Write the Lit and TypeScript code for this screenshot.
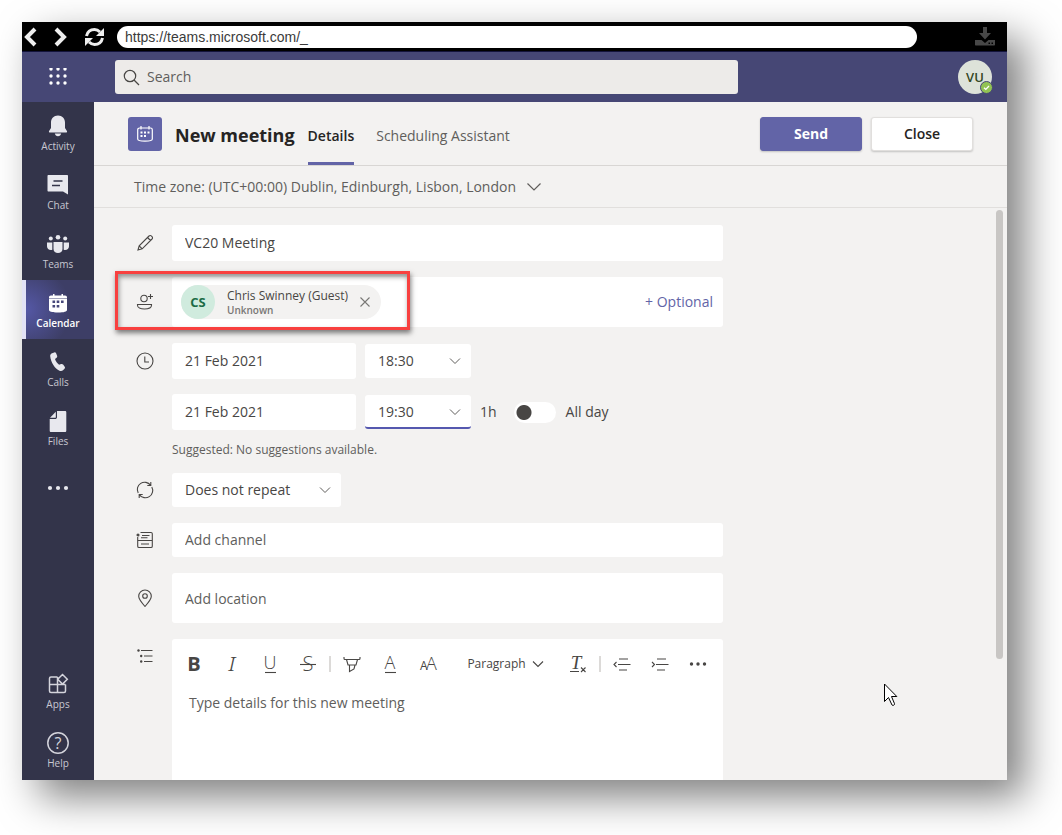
import { LitElement, html, css, svg, TemplateResult } from "lit";
import { customElement } from "lit/decorators.js";
import { classMap } from "lit/directives/class-map.js";

const chevron = html`<svg class="chev" width="14" height="8" viewBox="0 0 14 8" fill="none" stroke="#605e5c" aria-hidden="true"><path d="M2 1.500 7 6.500l5-5"/></svg>`;

const icon = (size: number, body: TemplateResult | ReturnType<typeof svg>, label = "") =>
  html`<svg width=${size} height=${size} viewBox="0 0 ${size} ${size}" role="img" aria-label=${label}>${body}</svg>`;

const railIcons = {
  activity: svg`<path fill="#e8e8ee" d="M12 1.500c4.200 0 7 3 7 7v5.500l1.900 3c.5.900 0 1.500-.8 1.500H3.900c-.8 0-1.300-.6-.8-1.500L5 14V8.500c0-4 2.800-7 7-7zM8.800 19.500h6.400c-.3 1.500-1.600 2.700-3.200 2.700s-2.900-1.200-3.200-2.700z"/>`,
  chat: svg`<path fill="#e8e8ee" d="M2.500 2h18.500c.6 0 1 .4 1 1v18.500L17 18.500H2.500c-.6 0-1-.4-1-1V3c0-.6.4-1 1-1z"/><path stroke="#33344a" stroke-width="1.300" d="M7.500 8h9M6 12.500h8"/>`,
  teams: svg`<g fill="#e8e8ee"><circle cx="12" cy="5.300" r="2.300"/><circle cx="4.800" cy="6.500" r="2"/><circle cx="19.200" cy="6.500" r="2"/><path d="M7.500 10h9v7c0 2.600-2 4-4.500 4s-4.500-1.400-4.500-4zM1 10.500h5.300v7.300C3.300 18.500 1 17 1 14.300zM17.700 10.500H23v3.800c0 2.700-2.300 4.200-5.300 3.500z"/></g>`,
  calendar: svg`<path fill="#fff" d="M5 4.500h2V3h1.500v1.500h7V3H17v1.500h2c1.400 0 2 .8 2 2v1H3v-1c0-1.200.7-2 2-2zM3 8h18v11c0 1.600-3 2.500-9 2.500S3 20.600 3 19z"/><path fill="#46477a" d="M10.700 9.500h2.600v2.600h-2.600zM15 9.500h2.600v2.600H15zM6.500 9.500h2.600v2.600H6.500zM10.700 14h2.600v2.600h-2.600zM6.500 14h2.600v2.600H6.500z"/>`,
  calls: svg`<path fill="#e8e8ee" d="M6 3.200 8.300 2.400c.8-.2 1.500.1 1.800.8l1 2.500c.3.800.1 1.500-.5 2l-1.600 1.400c.8 2.300 2.200 4.200 4.100 5.600l2-.7c.8-.3 1.500 0 2 .6l1.600 2.100c.5.700.4 1.500-.2 2.100l-1.500 1.500c-.9.900-2.200 1-3.500.5C9 18.800 4.800 12.500 4.200 6.300c-.1-1.400.5-2.600 1.800-3.100z"/>`,
  files: svg`<path fill="#e8e8ee" d="M11 2h8c.8 0 1.300.5 1.300 1.300v18.400c0 .8-.5 1.300-1.300 1.300H5c-.8 0-1.300-.5-1.300-1.300V10h5.500c1 0 1.800-.8 1.800-1.800z"/><path fill="#e8e8ee" d="M9.800 2.800v5.400c0 .4-.3.600-.6.600H4z"/>`,
  apps: svg`<path fill="none" stroke="#d4d4dc" stroke-width="1.500" d="M11.500 5H5c-.8 0-1.500.7-1.500 1.500V19c0 .8.700 1.500 1.500 1.500h13c.8 0 1.500-.7 1.500-1.500v-6.500M3.500 12.500h16M11.500 5v15.500M16.500 2.500l4.800 4.800-4.800 4.800-4.800-4.800z"/>`,
  help: svg`<circle cx="12" cy="12" r="10.200" fill="none" stroke="#d4d4dc" stroke-width="1.500"/><text x="12" y="17.500" text-anchor="middle" font-size="16" fill="#d4d4dc">?</text>`,
};

const rail: { id: keyof typeof railIcons; label: string; active?: boolean }[] = [
  { id: "activity", label: "Activity" },
  { id: "chat", label: "Chat" },
  { id: "teams", label: "Teams" },
  { id: "calendar", label: "Calendar", active: true },
  { id: "calls", label: "Calls" },
  { id: "files", label: "Files" },
];

const rowIcons = {
  title: svg`<path d="M2 16l1.200-4.200L13 2c.7-.7 1.700-.7 2.300 0l.7.700c.7.700.7 1.700 0 2.300L6.200 14.800zM11.500 3.500l3 3M3.200 11.800l3 3"/>`,
  people: svg`<circle cx="8" cy="5.500" r="3.200"/><path d="M1.500 11.500h14v.8c0 2.400-3 3.700-7 3.700s-7-1.300-7-3.700zM14.500 1v5M12 3.500h5"/>`,
  clock: svg`<circle cx="9" cy="9" r="8"/><path d="M8.800 4.500V10H13"/>`,
  repeat: svg`<path d="M2.200 12A7.300 7.300 0 0 1 14.500 4.200M15.800 6A7.300 7.300 0 0 1 3.500 13.800M14.800 1v3.500h-3.500M3.200 17v-3.500h3.500"/>`,
  channel: svg`<path d="M4.500 1.500H15c.8 0 1.300.5 1.300 1.300v12.400c0 .8-.5 1.300-1.300 1.300H3c-.8 0-1.300-.5-1.300-1.300V6M1.700 9.500h14.600M6 4.500h7.500M5 6.800h6.500M5 13h8"/><circle cx="2" cy="4" r="1" fill="#484644"/>`,
  place: svg`<path d="M9 17.500C5 13 2.700 10 2.700 7.300a6.300 6.300 0 0 1 12.600 0C15.300 10 13 13 9 17.500z"/><circle cx="9" cy="7" r="2.300"/>`,
  details: svg`<path d="M5 3.500h11.500M8 9h8.500M8 14.500h8.500"/><g fill="#484644" stroke="none"><circle cx="2.500" cy="3.500" r="1.200"/><circle cx="5.200" cy="9" r="1.200"/><circle cx="5.200" cy="14.500" r="1.200"/></g>`,
};

@customElement("app-root")
export class AppRoot extends LitElement {
  static styles = css`
    :host {
      display: block;
      box-sizing: border-box;
      height: 100vh;
      padding: 22px 55px 55px 22px;
      background: #fff;
      overflow: hidden;
      font-family: "Open Sans", "Noto Sans", sans-serif;
      font-size: 14px;
      line-height: 20px;
      color: #484644;
    }
    * { box-sizing: border-box; }
    svg { display: block; flex: none; }
    button, input, select, textarea {
      font: inherit;
      color: inherit;
      margin: 0;
      padding: 0;
      border: 0;
      border-radius: 3px;
      background: none;
      outline: none;
    }
    .window {
      display: flex;
      flex-direction: column;
      height: 100%;
      background: #f3f2f1;
      box-shadow: 17px 17px 38px rgba(0, 0, 0, 0.5);
    }
    .browser {
      display: flex;
      align-items: center;
      height: 30px;
      padding-right: 12px;
      background: #000;
      border-bottom: 1px solid #14143c;
    }
    .browser .tools { display: flex; width: 95px; }
    .browser .url {
      flex: 0 1 800px;
      height: 22px;
      padding: 0 8px;
      border-radius: 11px;
      background: #fff;
      color: #3b3b3b;
      font-family: "Liberation Sans", Arial, sans-serif;
    }
    .browser .save { margin-left: auto; }
    .topbar {
      display: flex;
      align-items: center;
      height: 50px;
      padding-right: 15px;
      background: #464775;
    }
    .waffle { width: 72px; display: flex; justify-content: center; }
    .search {
      flex: 0 1 623px;
      display: flex;
      align-items: center;
      gap: 7px;
      height: 34px;
      margin-left: 21px;
      padding: 0 8px;
      border-radius: 3px;
      background: #edebe9;
    }
    .search input { flex: 1; }
    .search input::placeholder { color: #605e5c; opacity: 1; }
    .me {
      position: relative;
      display: grid;
      place-items: center;
      width: 34px;
      height: 34px;
      margin-left: auto;
      border-radius: 50%;
      background: #dde2d9;
      color: #33471f;
      font-size: 13px;
      font-weight: 600;
    }
    .me svg { position: absolute; right: -1px; bottom: 0; }
    .body { display: flex; flex: 1; min-height: 0; }
    .rail {
      display: flex;
      flex-direction: column;
      width: 72px;
      padding: 1px 0;
      background: #33344a;
    }
    .rail button {
      display: flex;
      flex-direction: column;
      align-items: center;
      gap: 1px;
      height: 59px;
      padding-top: 11px;
      border-radius: 0;
      color: #c8c8d2;
      font-size: 10px;
      line-height: 14px;
    }
    .rail .active {
      padding-right: 4px;
      border-left: 4px solid #e2e2f6;
      background: radial-gradient(circle at 0 50%, #5558a6, #3d3e66 60%);
      color: #fff;
      font-weight: 600;
    }
    .rail .more { justify-content: center; padding: 3px 0 0; }
    .rail .push { margin-top: auto; }
    .main { display: flex; flex-direction: column; flex: 1; min-width: 0; }
    .head {
      display: flex;
      align-items: center;
      height: 64px;
      padding: 0 34px;
      border-bottom: 1px solid #d8d6d4;
    }
    .tile {
      display: grid;
      place-items: center;
      width: 34px;
      height: 34px;
      border-radius: 3px;
      background: #6264a7;
    }
    h1 {
      margin: 0 13px;
      padding-top: 2px;
      font-size: 18px;
      line-height: 24px;
      font-weight: 700;
      color: #252423;
      white-space: nowrap;
    }
    .tabs { display: flex; align-self: stretch; gap: 22px; }
    .tabs button { border-radius: 0; border-bottom: 3px solid transparent; padding-top: 8px; color: #605e5c; white-space: nowrap; }
    .tabs .on { border-bottom-color: #6264a7; color: #252423; font-weight: 600; }
    .actions { display: flex; gap: 9px; margin-left: auto; }
    .actions button {
      width: 102px;
      height: 34px;
      border: 1px solid #e1dfdd;
      background: #fff;
      color: #252423;
      font-weight: 600;
      box-shadow: 0 1px 2px rgba(0, 0, 0, 0.2);
    }
    .actions .primary { border-color: #6264a7; background: #6264a7; color: #fff; font-weight: 700; }
    .zone {
      display: flex;
      align-items: center;
      gap: 10px;
      height: 42px;
      padding: 0 40px;
      border-radius: 0;
      border-bottom: 1px solid #e1dfdd;
      color: #605e5c;
    }
    .scroller { position: relative; display: flex; flex: 1; min-height: 0; overflow: hidden; }
    form {
      display: flex;
      flex-direction: column;
      gap: 16px;
      flex: 1;
      min-width: 0;
      padding: 17px 20px 0 36px;
    }
    .row {
      position: relative;
      display: grid;
      grid-template-columns: 30px minmax(0, 551px);
      column-gap: 12px;
      align-items: center;
      flex: none;
    }
    .row > label { display: grid; place-items: center; }
    .row label svg { fill: none; stroke: #484644; stroke-width: 1.1; }
    .grow { flex: 1; align-items: stretch; min-height: 0; }
    .grow > label { align-self: start; padding-top: 8px; }
    .field { width: 100%; height: 36px; padding: 0 13px 2px; background: #fff; }
    .short { height: 34px; }
    .tall { height: 50px; padding-bottom: 0; }
    ::placeholder { color: #605e5c; opacity: 1; }
    .people {
      display: flex;
      align-items: center;
      height: 50px;
      padding: 0 10px 0 9px;
      border-radius: 3px;
      background: #fff;
    }
    .people input { flex: 1; min-width: 0; height: 34px; }
    .people .optional { color: #6264a7; }
    .chip {
      display: flex;
      align-items: center;
      gap: 12px;
      height: 34px;
      padding-right: 11px;
      border-radius: 17px;
      background: #f3f2f1;
    }
    .chip .pic {
      display: grid;
      place-items: center;
      width: 34px;
      height: 34px;
      border-radius: 50%;
      background: #d0ebde;
      color: #1c6b46;
      font-weight: 700;
      font-size: 13px;
    }
    .chip .who { display: flex; flex-direction: column; font-size: 12px; line-height: 16px; }
    .chip small { font-size: 10px; line-height: 12px; font-weight: 600; color: #797775; }
    .mark {
      position: absolute;
      left: -15px;
      top: -6px;
      width: 295px;
      height: 59px;
      border: 3px solid #f8403f;
      box-shadow: 1px 3px 5px rgba(0, 0, 0, 0.5), inset 1px 3px 5px rgba(0, 0, 0, 0.4);
      pointer-events: none;
    }
    .times { display: grid; grid-template-columns: 184px 106px auto 1fr; gap: 15px 9px; align-items: center; }
    .start { grid-column: 1; }
    .when { align-self: start; padding-top: 9px; }
    .pick { display: grid; align-items: center; height: 34px; border-radius: 3px; background: #fff; }
    .pick select { grid-area: 1 / 1; width: 100%; height: 34px; padding: 0 13px; appearance: none; }
    .pick svg { grid-area: 1 / 1; justify-self: end; margin-right: 9px; pointer-events: none; }
    .focus { border-bottom: 2px solid #5558af; }
    .wide { width: 169px; }
    .allday { display: flex; align-items: center; gap: 10px; margin-left: 8px; }
    .allday input {
      appearance: none;
      width: 42px;
      height: 21px;
      border-radius: 11px;
      background: radial-gradient(circle at 10px 50%, #484644 7px, #fff 8px);
    }
    .hint { margin: 0; padding-top: 13px; font-size: 12px; line-height: 14px; color: #605e5c; }
    .editor { display: flex; flex-direction: column; border-radius: 3px 3px 0 0; background: #fff; }
    .bar { display: flex; align-items: center; height: 50px; padding: 0 3px; }
    .bar button { display: flex; align-items: center; justify-content: center; flex: 0 1 38px; height: 34px; }
    .bar .style { flex-basis: 112px; gap: 6px; padding-left: 5px; font-size: 12px; }
    .bar .sep { flex: none; width: 2px; height: 16px; margin: 0 2px; background: #dcdad8; }
    .bar svg { fill: none; stroke: #484644; stroke-width: 1.1; overflow: visible; }
    .bar svg text { fill: #484644; stroke: none; }
    textarea { flex: 1; padding: 4px 17px; resize: none; border-radius: 0; }
    .thumb { width: 7px; height: 449px; margin: 2px 4px 0 0; border-radius: 4px; background: #c8c6c4; }
    .cursor { position: absolute; left: 790px; top: 475px; }
  `;

  private railItem(id: keyof typeof railIcons, label: string, cls: Record<string, boolean>) {
    return html`<button class=${classMap(cls)}>${icon(24, railIcons[id], "")}<span>${label}</span></button>`;
  }

  private time(id: string, label: string, value: string, focused = false) {
    return html`<div class=${classMap({ pick: true, focus: focused })}>
      <select id=${id} aria-label=${label}><option>${value}</option></select>${chevron}
    </div>`;
  }

  render() {
    return html`
      <div class="window">
        <div class="browser">
          <div class="tools">
            <button aria-label="Back"><svg width="31" height="20" viewBox="0 0 31 20" fill="none" stroke="#eee" stroke-width="4"><path d="M13 2 5 10l8 8"/></svg></button>
            <button aria-label="Forward"><svg width="31" height="20" viewBox="0 0 31 20" fill="none" stroke="#eee" stroke-width="4"><path d="m3 2 8 8-8 8"/></svg></button>
            <button aria-label="Reload"><svg width="22" height="20" viewBox="0 0 22 20" fill="none" stroke="#eee" stroke-width="3"><path d="M2.500 9C3.500 4.500 6.500 2.500 10.500 2.500c2.500 0 4 1 5.500 2.500M18.500 11c-1 4.500-4 6.500-8 6.500-2.500 0-4-1-5.500-2.500"/><path fill="#eee" stroke="none" d="M20 1v8h-8zM1 19v-8h8z"/></svg></button>
          </div>
          <input class="url" aria-label="Address" value="https://teams.microsoft.com/_">
          <button class="save" aria-label="Download"><svg width="20" height="19" viewBox="0 0 20 19" fill="#484848"><path d="M8 0h4v6h4l-6 6.500L4 6h4zM0 13h6.500l3.500 3 3.500-3H20v4.500c0 .6-.4 1-1 1H1c-.6 0-1-.4-1-1z"/><path fill="#000" d="M13.500 15.500h1.500V17h-1.500zM16.500 15.500H18V17h-1.500z"/></svg></button>
        </div>
        <header class="topbar">
          <button class="waffle" aria-label="Apps menu"><svg width="18" height="18" viewBox="0 0 18 18" fill="#fff">
            ${[1, 8, 15].map((y) => [2, 9, 16].map((x) => svg`<circle cx=${x} cy=${y} r="1.700"/>`))}</svg></button>
          <div class="search">
            <svg width="17" height="17" viewBox="0 0 17 17" fill="none" stroke="#484644" stroke-width="1.200" aria-hidden="true"><circle cx="7" cy="7" r="5.700"/><path d="m11 11 5 5"/></svg>
            <input aria-label="Search" placeholder="Search">
          </div>
          <button class="me" aria-label="Account VU">VU<svg width="13" height="13" viewBox="0 0 13 13"><circle cx="6.500" cy="6.500" r="6" fill="#92c353" stroke="#464775"/><path d="m4 6.700 1.800 1.700L9 5" fill="none" stroke="#fff" stroke-width="1.300"/></svg></button>
        </header>
        <div class="body">
          <nav class="rail">
            ${rail.map((r) => this.railItem(r.id, r.label, { active: !!r.active }))}
            <button class="more" aria-label="More apps"><svg width="22" height="6" viewBox="0 0 22 6" fill="#e8e8ee"><circle cx="3" cy="3" r="2.100"/><circle cx="11" cy="3" r="2.100"/><circle cx="19" cy="3" r="2.100"/></svg></button>
            ${this.railItem("apps", "Apps", { push: true })} ${this.railItem("help", "Help", {})}
          </nav>
          <main class="main">
            <div class="head">
              <div class="tile"><svg width="18" height="18" viewBox="0 0 18 18" fill="none" stroke="#fff" stroke-width="1.200" aria-hidden="true"><path d="M4 3h10.500c1 0 1.800.7 1.800 1.800V14c0 1.500-2 2.200-7.300 2.200S1.700 15.500 1.700 14V4.800C1.700 3.700 2.500 3 3.500 3zM5 1v3.500M13 1v3.500"/><path fill="#fff" stroke="none" d="M8 6.500h2v2H8zM11.500 6.500h2v2h-2zM4.500 10h2v2h-2zM8 10h2v2H8zM4.500 6.500h2v2h-2z"/></svg></div>
              <h1>New meeting</h1>
              <div class="tabs"><button class="on">Details</button><button>Scheduling Assistant</button></div>
              <div class="actions"><button class="primary">Send</button><button>Close</button></div>
            </div>
            <button class="zone">Time zone: (UTC+00:00) Dublin, Edinburgh, Lisbon, London
              <svg width="16" height="10" viewBox="0 0 16 10" fill="none" stroke="#605e5c" stroke-width="1.200"><path d="m1.500 1.500 6.500 6.500 6.500-6.500"/></svg></button>
            <div class="scroller">
              <form>
                <div class="row"><label for="title">${icon(18, rowIcons.title, "Title")}</label><input id="title" class="field" value="VC20 Meeting"></div>
                <div class="row">
                  <label for="people">${icon(18, rowIcons.people, "Attendees")}</label>
                  <div class="people">
                    <div class="chip">
                      <span class="pic">CS</span>
                      <span class="who">Chris Swinney (Guest)<small>Unknown</small></span>
                      <button type="button" aria-label="Remove"><svg width="10" height="10" viewBox="0 0 10 10" stroke="#797775" stroke-width="1.100"><path d="m.5.5 9 9m0-9-9 9"/></svg></button>
                    </div>
                    <input id="people"><button type="button" class="optional">+ Optional</button>
                  </div>
                  <div class="mark"></div>
                </div>
                <div class="row">
                  <label class="when" for="start">${icon(18, rowIcons.clock, "Start date")}</label>
                  <div>
                    <div class="times">
                      <input id="start" class="field start" value="21 Feb 2021">
                      ${this.time("start-time", "Start time", "18:30")}
                      <input class="field start" aria-label="End date" value="21 Feb 2021">
                      ${this.time("end-time", "End time", "19:30", true)}
                      <span>1h</span>
                      <label class="allday"><input type="checkbox" role="switch">All day</label>
                    </div>
                    <p class="hint">Suggested: No suggestions available.</p>
                  </div>
                </div>
                <div class="row">
                  <label for="repeat">${icon(18, rowIcons.repeat, "Repeat")}</label>
                  <div class="pick wide"><select id="repeat"><option>Does not repeat</option></select>${chevron}</div>
                </div>
                <div class="row"><label for="channel">${icon(18, rowIcons.channel, "Channel")}</label><input id="channel" class="field short" placeholder="Add channel"></div>
                <div class="row"><label for="place">${icon(18, rowIcons.place, "Location")}</label><input id="place" class="field tall" placeholder="Add location"></div>
                <div class="row grow">
                  <label for="details">${icon(18, rowIcons.details, "Details")}</label>
                  <div class="editor">
                    <div class="bar">
                      <button type="button" aria-label="Bold"><svg width="18" height="18"><text x="9" y="16" text-anchor="middle" font-size="20" font-weight="700">B</text></svg></button>
                      <button type="button" aria-label="Italic"><svg width="18" height="18"><text x="9" y="16" text-anchor="middle" font-size="20" font-family="Noto Serif, DejaVu Serif, serif" font-weight="300" font-style="italic">I</text></svg></button>
                      <button type="button" aria-label="Underline"><svg width="18" height="18"><text x="9" y="14" text-anchor="middle" font-size="18" font-weight="300">U</text><path d="M4 17.500h11"/></svg></button>
                      <button type="button" aria-label="Strikethrough"><svg width="18" height="18"><text x="9" y="16" text-anchor="middle" font-size="20" font-weight="300">S</text><path d="M1 9.500h16"/></svg></button>
                      <span class="sep"></span>
                      <button type="button" aria-label="Highlight"><svg width="18" height="18" viewBox="0 0 18 18"><path d="M1 2v1.500c0 .6.400 1 1 1h14c.6 0 1-.4 1-1V2M3.500 4.500 5 10h8l1.500-5.500M6.500 10v6.500l4.500-2.500 1-4"/></svg></button>
                      <button type="button" aria-label="Font color"><svg width="18" height="18"><text x="9" y="14" text-anchor="middle" font-size="18" font-weight="300">A</text><path d="M4 17.500h11"/></svg></button>
                      <button type="button" aria-label="Font size"><svg width="18" height="18"><text x="1" y="15" font-size="12">A</text><text x="7" y="15" font-size="18" font-weight="300">A</text></svg></button>
                      <button type="button" class="style">Paragraph <svg width="12" height="8" viewBox="0 0 12 8"><path d="m1 1.500 5 5 5-5"/></svg></button>
                      <button type="button" aria-label="Clear formatting"><svg width="18" height="18"><text x="7" y="14" text-anchor="middle" font-size="19" font-family="Liberation Serif" font-style="italic">T</text><path d="M1 16.500h9M12 12.500l4.500 4.500m0-4.500L12 17"/></svg></button>
                      <span class="sep"></span>
                      <button type="button" aria-label="Decrease indent"><svg width="18" height="18" viewBox="0 0 18 18"><path d="M6 4h9M5 9.500h12.500M6 15h8M3.500 7 1 9.500 3.500 12"/></svg></button>
                      <button type="button" aria-label="Increase indent"><svg width="18" height="18" viewBox="0 0 18 18"><path d="M6 4h9M5 9.500h12.500M6 15h8M1 7l2.500 2.500L1 12"/></svg></button>
                      <button type="button" aria-label="More options"><svg width="18" height="6" viewBox="0 0 18 6"><g fill="#484644" stroke="none"><circle cx="2.500" cy="3" r="1.700"/><circle cx="9" cy="3" r="1.700"/><circle cx="15.500" cy="3" r="1.700"/></g></svg></button>
                    </div>
                    <textarea id="details" placeholder="Type details for this new meeting"></textarea>
                  </div>
                </div>
              </form>
              <div class="thumb"></div>
              <svg class="cursor" width="14" height="24" viewBox="0 0 14 24" fill="#fff" stroke="#000" aria-hidden="true"><path d="M.5 1v17.500l4-4 3.500 7.500c.8 1 3 0 2.500-1.300L7.500 13.500h5.300z"/></svg>
            </div>
          </main>
        </div>
      </div>
    `;
  }
}
